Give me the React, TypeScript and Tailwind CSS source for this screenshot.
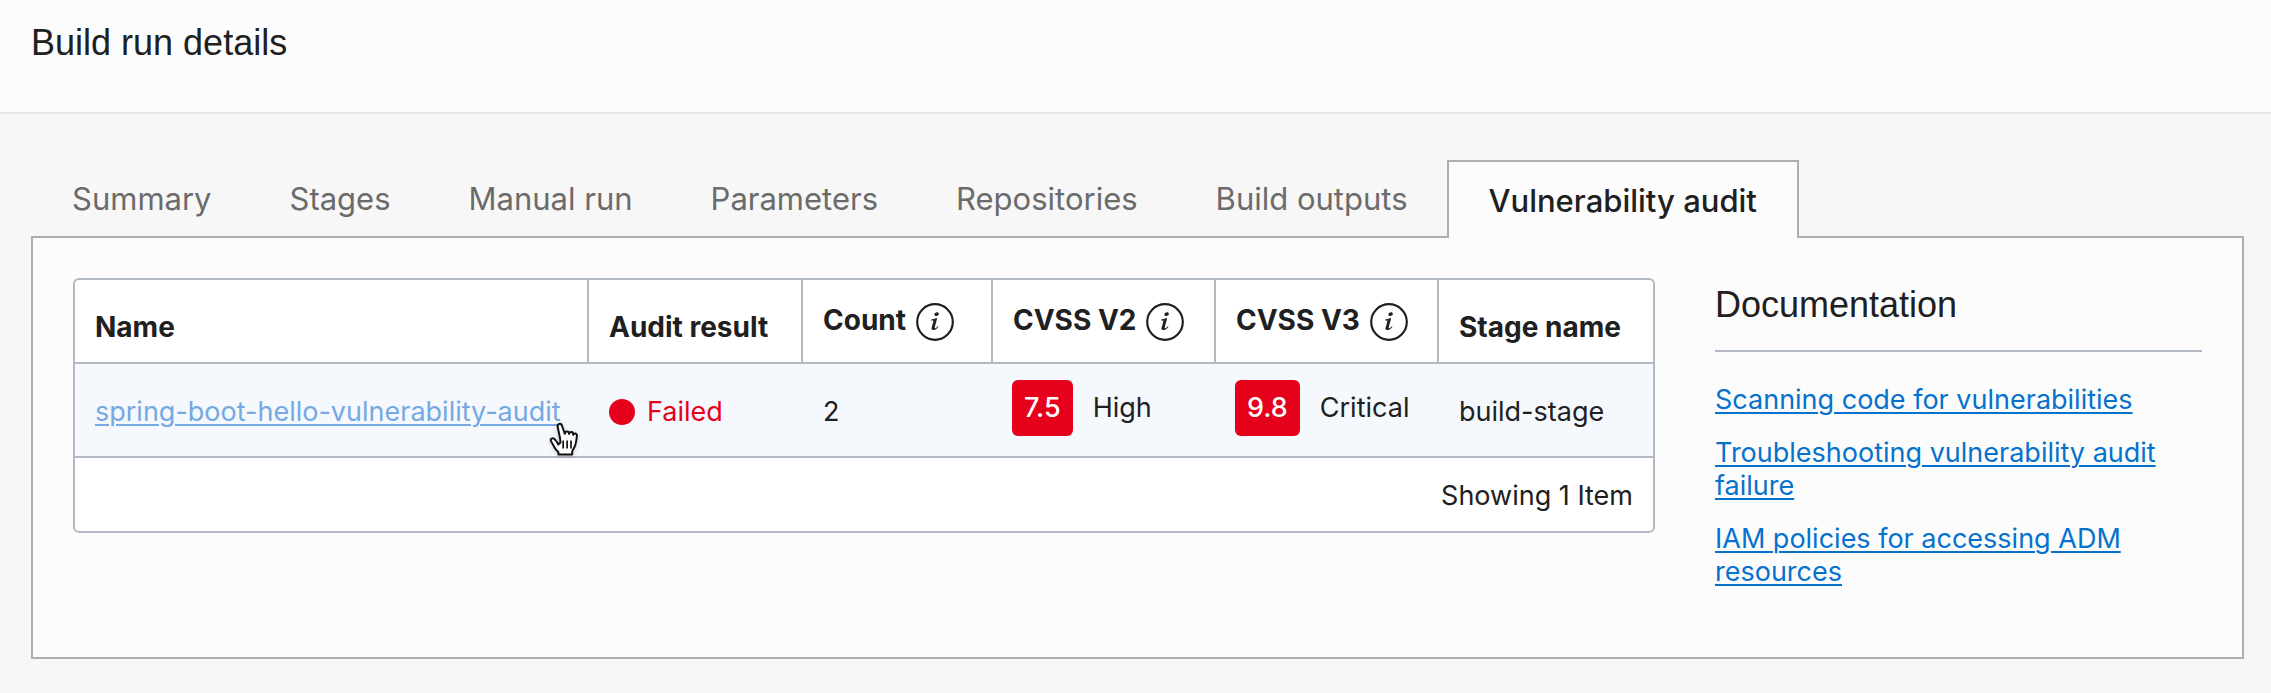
import type { ReactNode } from "react";

const tabs = [
  "Summary",
  "Stages",
  "Manual run",
  "Parameters",
  "Repositories",
  "Build outputs",
  "Vulnerability audit",
];
const activeTab = "Vulnerability audit";

const docs = [
  "Scanning code for vulnerabilities",
  "Troubleshooting vulnerability audit failure",
  "IAM policies for accessing ADM resources",
];

function InfoIcon() {
  return (
    <svg viewBox="0 0 38 38" className="size-[38px]" fill="none" aria-hidden="true">
      <circle cx="19" cy="19" r="17.8" stroke="#202020" strokeWidth="2.2" />
      <ellipse cx="20.6" cy="11.2" rx="2.3" ry="1.7" transform="rotate(-20 20.6 11.2)" fill="#202020" />
      <path
        d="M15.2 16.6c1.8-.2 3.600-.7 5.400-1.500l.5.3-2.400 9.100c-.2.800.1 1 .6.800.9-.3 1.700-1.100 2.500-2.100l.7.4c-1.300 2-2.900 3.400-4.900 3.500-1.700.1-2.400-1-1.900-2.700l1.700-6.200c.1-.4-.1-.6-.5-.6h-1.700z"
        fill="#202020"
      />
    </svg>
  );
}

function HandPointer() {
  return (
    <svg
      viewBox="0 0 32 34"
      className="pointer-events-none absolute right-[-20px] top-[30px] h-[34px] w-8 drop-shadow-sm"
      aria-hidden="true"
    >
      <path
        d="M9.300 22.500 8.600 21 6 17.600c-.9-1.100-2.200-1.500-3.300-1-1.200.6-1.200 1.900-.4 3.100 1.300 2 2.200 3.700 3.200 5.800.9 1.900 2.600 3.300 3.900 4.700V32.500h13.800v-2.800c.3-1.600 1.400-2.900 2.200-4.500 1-2.100 1.600-4.300 1.900-6.700.2-1.600.5-3.300.6-4.800.1-1.400-.7-2.200-1.800-2.200-.9 0-1.600.6-1.900 1.400.1-1.500-.5-2.700-1.900-2.800-1.200-.1-2 .7-2.200 1.800-.1-1.400-.9-2.300-2.100-2.300-1.300 0-2.100.9-2.200 2.200L13.200 4.200C12.800 2.700 11.800 1.600 10.300 1.900 8.900 2.200 8.400 3.500 8.700 5l2.400 11.800.4 3.700z"
        fill="#fff"
        stroke="#111"
        strokeWidth="2"
        strokeLinejoin="round"
      />
      <path d="M14.200 18.500v8M18.100 18.500v8M22 18.500v8" stroke="#111" strokeWidth="1.700" />
    </svg>
  );
}

function HeaderCell({ children, info = false }: { children: ReactNode; info?: boolean }) {
  const box =
    "border-b-2 border-r-2 border-[#b3b9c4] px-5 text-left align-bottom text-[28px] font-bold last:border-r-0 whitespace-nowrap";
  if (!info) {
    return <th scope="col" className={`${box} pb-[15px]`}>{children}</th>;
  }
  return (
    <th scope="col" className={`${box} pb-[21px]`}>
      <div className="flex items-start gap-2.5">
        <span>{children}</span>
        <button type="button" aria-label="More information" className="mt-[3px] shrink-0">
          <InfoIcon />
        </button>
      </div>
    </th>
  );
}

function Severity({ score, label }: { score: string; label: string }) {
  return (
    <div className="flex items-center gap-5">
      <span className="flex h-14 items-center rounded-md bg-[#e5001b] px-3 font-medium text-white">{score}</span>
      <span>{label}</span>
    </div>
  );
}

export default function App() {
  return (
    <div className="min-h-screen bg-[#f7f7f7] font-['Inter','Noto_Sans',sans-serif] text-[27px] leading-10 text-[#202020]">
      <header className="border-b-2 border-[#e6e6e6] bg-[#fcfcfc] px-[31px] pb-[49px] pt-[23px]">
        <h1 className="font-['Liberation_Sans',Arial,sans-serif] text-[36px] leading-10">Build run details</h1>
      </header>

      <main className="pb-8 pl-[31px] pr-[27px] pt-[46px]">
        <div role="tablist" className="relative z-10 -mb-0.5 flex pl-0.5 text-[31px]">
          {tabs.map((tab) =>
            tab === activeTab ? (
              <button
                key={tab}
                type="button"
                role="tab"
                aria-selected="true"
                className="border-2 border-b-0 border-[#aeaeae] bg-[#fcfcfc] px-10 pb-[17px] pt-[19px] font-medium"
              >
                {tab}
              </button>
            ) : (
              <button
                key={tab}
                type="button"
                role="tab"
                aria-selected="false"
                className="px-[39px] pb-[19px] pt-[19px] text-[#6b6b6b]"
              >
                {tab}
              </button>
            ),
          )}
        </div>

        <section className="flex items-start gap-[60px] border-2 border-[#aeaeae] bg-[#fcfcfc] px-10 pb-[69px] pt-10">
          <div className="min-w-0 flex-1 overflow-hidden rounded-md border-2 border-[#b3b9c4] bg-white">
            <table className="w-full table-fixed border-separate border-spacing-0">
              <colgroup>
                <col />
                <col className="w-[214px]" />
                <col className="w-[190px]" />
                <col className="w-[223px]" />
                <col className="w-[223px]" />
                <col className="w-[214px]" />
              </colgroup>
              <thead>
                <tr className="h-[84px]">
                  <HeaderCell>Name</HeaderCell>
                  <HeaderCell>Audit result</HeaderCell>
                  <HeaderCell info>Count</HeaderCell>
                  <HeaderCell info>CVSS V2</HeaderCell>
                  <HeaderCell info>CVSS V3</HeaderCell>
                  <HeaderCell>Stage name</HeaderCell>
                </tr>
              </thead>
              <tbody>
                <tr className="bg-[#f5f9fe] align-top whitespace-nowrap">
                  <td className="px-5 pb-6 pt-7">
                    <span className="relative inline-block">
                      <a href="#audit" className="text-[#76a8e2] underline decoration-2 underline-offset-3">
                        spring-boot-hello-vulnerability-audit
                      </a>
                      <HandPointer />
                    </span>
                  </td>
                  <td className="px-5 pb-6 pt-7 text-[#e5001b]">
                    <div className="flex items-center gap-3">
                      <span className="size-[26px] rounded-full bg-[#e5001b]" />
                      Failed
                    </div>
                  </td>
                  <td className="px-5 pb-6 pt-7">2</td>
                  <td className="px-[19px] pb-5 pt-4">
                    <Severity score="7.5" label="High" />
                  </td>
                  <td className="px-[19px] pb-5 pt-4">
                    <Severity score="9.8" label="Critical" />
                  </td>
                  <td className="px-5 pb-6 pt-7">build-stage</td>
                </tr>
              </tbody>
              <tfoot>
                <tr>
                  <td colSpan={6} className="border-t-2 border-[#b3b9c4] px-5 pb-[15px] pt-[18px] text-right">
                    Showing 1 Item
                  </td>
                </tr>
              </tfoot>
            </table>
          </div>

          <aside className="w-[487px] shrink-0 pt-[7px]">
            <h2 className="border-b-2 border-[#b3b9c4] pb-[25px] font-['Liberation_Sans',Arial,sans-serif] text-[36px] leading-10">
              Documentation
            </h2>
            <ul className="mt-[31px] flex flex-col gap-5 leading-[33px]">
              {docs.map((doc) => (
                <li key={doc}>
                  <a href="#docs" className="text-[#0572ce] underline decoration-2 underline-offset-3">
                    {doc}
                  </a>
                </li>
              ))}
            </ul>
          </aside>
        </section>
      </main>
    </div>
  );
}
